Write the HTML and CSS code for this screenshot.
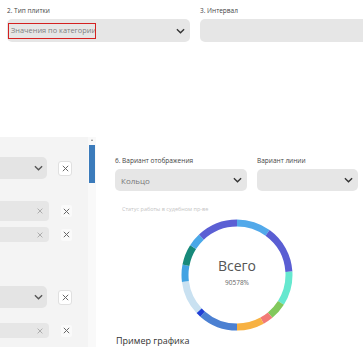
FILE: index.html
```html
<!DOCTYPE html>
<html lang="ru">

<head>
    <meta charset="UTF-8" />
    <meta name="viewport" content="width=device-width, initial-scale=1" />
    <title>Настройка плитки</title>
    <link rel="stylesheet" href="styles.css">
</head>

<body>
    <!-- Top settings row -->
    <div class="top-row">
        <div class="field field-type">
            <div class="field-label">2. Тип плитки</div>
            <div class="select">
                <span class="select-value focused">Значения по категории</span>
                <svg class="chevron" viewBox="0 0 10 6"><path d="M1 1l4 4 4-4" /></svg>
            </div>
        </div>
        <div class="field field-interval">
            <div class="field-label">3. Интервал</div>
            <div class="select"></div>
        </div>
    </div>

    <div class="lower">
        <!-- Filter panel (scrolled) -->
        <div class="panel">
            <div class="panel-body">
                <div class="row row-select1">
                    <div class="select small">
                        <svg class="chevron" viewBox="0 0 10 6"><path d="M1 1l4 4 4-4" /></svg>
                    </div>
                    <span class="x-btn"><svg viewBox="0 0 10 10"><path d="M2 2l6 6M8 2l-6 6" /></svg></span>
                </div>
                <div class="row row-input1">
                    <div class="input tall">
                        <svg class="x-inner" viewBox="0 0 10 10"><path d="M2 2l6 6M8 2l-6 6" /></svg>
                    </div>
                    <span class="x-plain"><svg viewBox="0 0 10 10"><path d="M2 2l6 6M8 2l-6 6" /></svg></span>
                </div>
                <div class="row row-input2">
                    <div class="input short">
                        <svg class="x-inner" viewBox="0 0 10 10"><path d="M2 2l6 6M8 2l-6 6" /></svg>
                    </div>
                    <span class="x-plain"><svg viewBox="0 0 10 10"><path d="M2 2l6 6M8 2l-6 6" /></svg></span>
                </div>
                <div class="row row-select2">
                    <div class="select small">
                        <svg class="chevron" viewBox="0 0 10 6"><path d="M1 1l4 4 4-4" /></svg>
                    </div>
                    <span class="x-btn"><svg viewBox="0 0 10 10"><path d="M2 2l6 6M8 2l-6 6" /></svg></span>
                </div>
                <div class="row row-input3">
                    <div class="input short">
                        <svg class="x-inner" viewBox="0 0 10 10"><path d="M2 2l6 6M8 2l-6 6" /></svg>
                    </div>
                    <span class="x-plain"><svg viewBox="0 0 10 10"><path d="M2 2l6 6M8 2l-6 6" /></svg></span>
                </div>
            </div>
            <div class="scrollbar">
                <span class="scroll-arrow"></span>
                <span class="scroll-thumb"></span>
            </div>
        </div>

        <!-- Chart settings and preview -->
        <div class="chart-col">
            <div class="chart-fields">
                <div class="field field-view">
                    <div class="field-label">6. Вариант отображения</div>
                    <div class="select">
                        <span class="select-value">Кольцо</span>
                        <svg class="chevron" viewBox="0 0 10 6"><path d="M1 1l4 4 4-4" /></svg>
                    </div>
                </div>
                <div class="field field-line">
                    <div class="field-label">Вариант линии</div>
                    <div class="select">
                        <svg class="chevron" viewBox="0 0 10 6"><path d="M1 1l4 4 4-4" /></svg>
                    </div>
                </div>
            </div>

            <div class="chart-caption">Статус работы в судебном пр-ве</div>

            <div class="donut">
                <svg viewBox="0 0 112 112" width="112" height="112">
                    <g transform="rotate(-90 56 56)" fill="none" stroke-width="7">
                        <circle cx="56" cy="56" r="52" pathLength="100" stroke="#52a9ea" stroke-dasharray="10 90" stroke-dashoffset="0" />
                        <circle cx="56" cy="56" r="52" pathLength="100" stroke="#5a5ed3" stroke-dasharray="14 86" stroke-dashoffset="-10" />
                        <circle cx="56" cy="56" r="52" pathLength="100" stroke="#66e8cf" stroke-dasharray="10 90" stroke-dashoffset="-24" />
                        <circle cx="56" cy="56" r="52" pathLength="100" stroke="#82c85c" stroke-dasharray="5 95" stroke-dashoffset="-34" />
                        <circle cx="56" cy="56" r="52" pathLength="100" stroke="#f27b76" stroke-dasharray="3 97" stroke-dashoffset="-39" />
                        <circle cx="56" cy="56" r="52" pathLength="100" stroke="#f7b142" stroke-dasharray="8 92" stroke-dashoffset="-42" />
                        <circle cx="56" cy="56" r="52" pathLength="100" stroke="#4b80d2" stroke-dasharray="11.5 88.5" stroke-dashoffset="-50" />
                        <circle cx="56" cy="56" r="52" pathLength="100" stroke="#1f3fd6" stroke-dasharray="1.5 98.5" stroke-dashoffset="-61.5" />
                        <circle cx="56" cy="56" r="52" pathLength="100" stroke="#c9e1f1" stroke-dasharray="10 90" stroke-dashoffset="-63" />
                        <circle cx="56" cy="56" r="52" pathLength="100" stroke="#42a3e3" stroke-dasharray="5 95" stroke-dashoffset="-73" />
                        <circle cx="56" cy="56" r="52" pathLength="100" stroke="#17897a" stroke-dasharray="6 94" stroke-dashoffset="-78" />
                        <circle cx="56" cy="56" r="52" pathLength="100" stroke="#4aa8e8" stroke-dasharray="4 96" stroke-dashoffset="-84" />
                        <circle cx="56" cy="56" r="52" pathLength="100" stroke="#5b5fd4" stroke-dasharray="12 88" stroke-dashoffset="-88" />
                    </g>
                </svg>
                <div class="donut-center">
                    <div class="donut-title">Всего</div>
                    <div class="donut-value">90578%</div>
                </div>
            </div>

            <div class="chart-example">Пример графика</div>
        </div>
    </div>
</body>

</html>
```

FILE: styles.css
```css
body {
    margin: 0;
    padding: 0;
    font-family: "Open Sans", "Liberation Sans", sans-serif;
    background-color: #fff;
    color: #333;
    width: 363px;
    height: 347px;
    overflow: hidden;
}

.top-row {
    display: flex;
    gap: 10px;
    padding: 6px 0 0 7px;
    height: 131px;
}

.field-label {
    font-size: 6.5px;
    line-height: 9px;
    color: #444;
    margin-bottom: 4px;
    white-space: nowrap;
}

.field-type {
    width: 183px;
    flex: none;
}

.field-interval {
    width: 180px;
    flex: none;
}

.select {
    display: flex;
    align-items: center;
    height: 23px;
    background-color: #e6e6e6;
    border-radius: 5px;
    padding: 0 5px 0 1px;
    box-sizing: border-box;
}

.select-value {
    flex: 1;
    font-size: 8px;
    color: #777;
    padding-left: 5px;
    white-space: nowrap;
}

.select-value.focused {
    flex: none;
    width: 88px;
    height: 16px;
    line-height: 13px;
    box-sizing: border-box;
    border: 1.5px solid #d42121;
    padding-left: 2px;
    font-size: 7.4px;
    color: #808080;
    overflow: hidden;
}

.chevron {
    width: 9px;
    height: 6px;
    margin-left: auto;
    fill: none;
    stroke: #333;
    stroke-width: 1.5;
}

.lower {
    display: flex;
    gap: 19px;
}

.panel {
    display: flex;
    width: 96px;
    height: 210px;
    flex: none;
}

.panel-body {
    width: 88px;
    background-color: #f4f4f4;
    overflow: hidden;
    padding-top: 20px;
    box-sizing: border-box;
}

.row {
    display: flex;
    justify-content: flex-end;
    align-items: center;
}

.row-select1 {
    gap: 11px;
    padding-right: 16px;
}

.row-input1 {
    margin-top: 22px;
    gap: 12px;
    padding-right: 16px;
}

.row-input2 {
    margin-top: 6px;
    gap: 12px;
    padding-right: 16px;
}

.row-select2 {
    margin-top: 44px;
    gap: 11px;
    padding-right: 16px;
}

.row-input3 {
    margin-top: 15px;
    gap: 12px;
    padding-right: 16px;
}

.select.small {
    flex: none;
    width: 110px;
    height: 22px;
    background-color: #e4e4e4;
    padding-right: 4px;
}

.select.small .chevron {
    stroke: #555;
}

.input {
    flex: none;
    display: flex;
    align-items: center;
    justify-content: flex-end;
    width: 110px;
    background-color: #e6e6e6;
    border-radius: 4px;
    padding-right: 5px;
    box-sizing: border-box;
}

.input.tall {
    height: 20px;
}

.input.short {
    height: 15px;
}

.x-inner {
    width: 8px;
    height: 8px;
    fill: none;
    stroke: #aaa;
    stroke-width: 1.2;
}

.x-btn {
    flex: none;
    display: flex;
    align-items: center;
    justify-content: center;
    width: 14px;
    height: 15px;
    background-color: #fff;
    border: 1px solid #e0e0e0;
    border-radius: 3px;
    box-sizing: border-box;
}

.x-plain {
    flex: none;
    display: flex;
    align-items: center;
    justify-content: center;
    width: 11px;
    height: 12px;
    background-color: #fafafa;
    border-radius: 2px;
}

.x-btn svg,
.x-plain svg {
    width: 9px;
    height: 9px;
    fill: none;
    stroke: #666;
    stroke-width: 1.1;
}

.scrollbar {
    width: 8px;
    background-color: #f9f9f9;
    display: flex;
    flex-direction: column;
    align-items: center;
}

.scroll-arrow {
    margin-top: 2px;
    width: 0;
    height: 0;
    border-left: 1.5px solid transparent;
    border-right: 1.5px solid transparent;
    border-bottom: 2px solid #888;
}

.scroll-thumb {
    margin-top: 4px;
    width: 6px;
    height: 38px;
    background-color: #3b7bbb;
}

.chart-col {
    width: 244px;
    flex: none;
    padding-top: 19px;
}

.chart-fields {
    display: flex;
    gap: 10px;
}

.field-view {
    width: 132px;
}

.field-line {
    width: 101px;
}

.field-view .select,
.field-line .select {
    height: 22px;
}

.chart-caption {
    margin: 14px 0 0 7px;
    font-size: 5.5px;
    line-height: 8px;
    color: #c4c4c4;
}

.donut {
    position: relative;
    width: 112px;
    height: 112px;
    margin: 6px auto 0;
}

.donut svg {
    display: block;
}

.donut-center {
    position: absolute;
    inset: 0;
    display: flex;
    flex-direction: column;
    align-items: center;
    justify-content: center;
    padding-bottom: 6px;
}

.donut-title {
    font-size: 14px;
    line-height: 16px;
    color: #555;
}

.donut-value {
    margin-top: 4px;
    font-size: 6.5px;
    color: #666;
}

.chart-example {
    margin: 3px 0 0 1px;
    font-size: 9px;
    color: #333;
}
```
